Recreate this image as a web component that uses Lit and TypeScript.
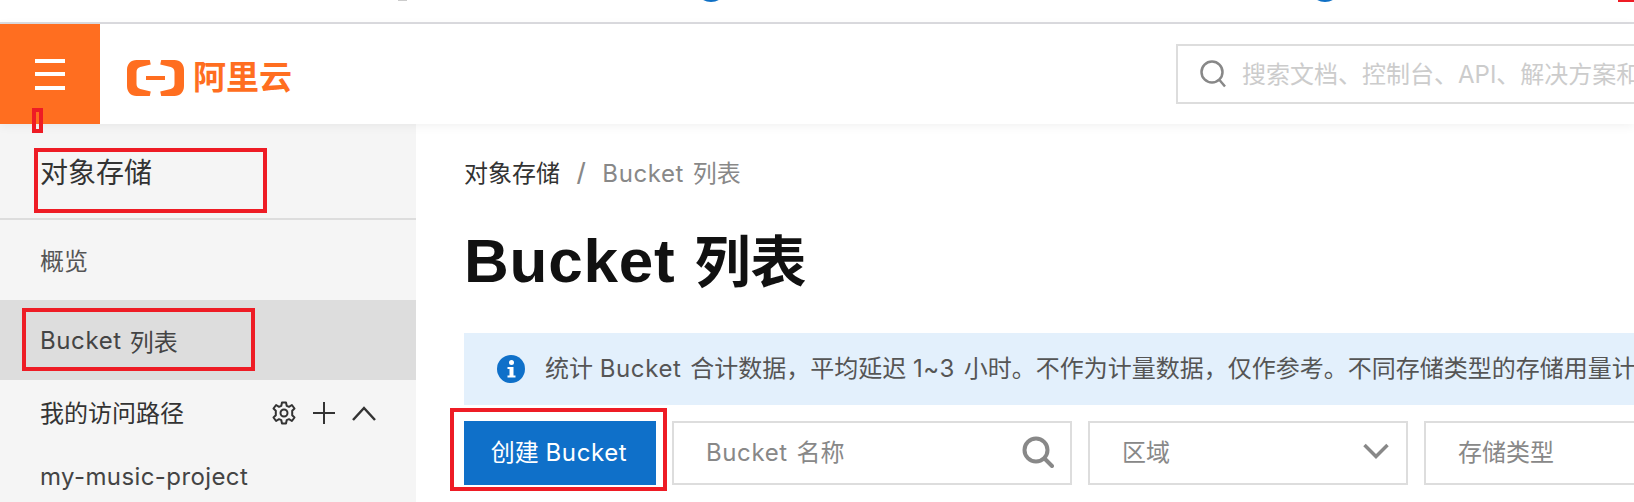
import { LitElement, html, css } from "lit";
import { customElement } from "lit/decorators.js";

@customElement("app-root")
export class AppRoot extends LitElement {
  static styles = css`
    :host {
      display: block;
      position: relative;
      width: 1634px;
      height: 502px;
      overflow: hidden;
      background: #fff;
      font-family: "Inter", "Noto Sans CJK SC", sans-serif;
      font-size: 24px;
      color: #333;
    }
    .lat { letter-spacing: .6px; margin-right: 2px; }
    .strip { position: relative; height: 22px; border-bottom: 2px solid #dcdce0; overflow: hidden; }
    .dot { position: absolute; top: -30px; width: 32px; height: 32px; border-radius: 50%; background: #0f70c5; }
    .d1 { left: 695px; }
    .d2 { left: 1309px; }
    .redtop { position: absolute; top: 0; left: 1618px; width: 16px; height: 2px; background: #ee1c25; }
    .speck { position: absolute; top: 0; left: 398px; width: 9px; height: 1px; background: #ccc; }
    header { position: relative; z-index: 2; display: flex; height: 100px; background: #fff; box-shadow: 0 2px 10px rgba(0,0,0,.06); }
    .menu { width: 100px; flex: none; background: #ff6e20; display: flex; flex-direction: column; justify-content: center; align-items: center; gap: 9.5px; box-sizing: border-box; }
    .menu i { display: block; width: 30px; height: 4px; background: #fff; }
    .logo { display: flex; align-items: center; gap: 9px; margin: 7px 0 0 27px; color: #ff6e20; font-size: 33px; font-weight: 700; line-height: 1; flex: none; }
    .logo svg { width: 57px; height: 38px; }
    .gsearch { margin: 20px 0 0 884px; height: 60px; flex: 1; min-width: 0; border: 2px solid #ddd; border-right: 0; display: flex; align-items: center; gap: 16px; padding-left: 22px; color: #ccc; white-space: nowrap; overflow: hidden; box-sizing: border-box; }
    .gsearch svg { width: 26px; height: 28px; flex: none; }
    .gsearch span { padding-bottom: 3px; }
    .body { display: flex; height: 378px; }
    aside { width: 416px; flex: none; background: #f5f5f5; }
    .title { height: 96px; box-sizing: border-box; border-bottom: 2px solid #ddd; padding: 31px 0 0 40px; font-size: 28px; line-height: 36px; }
    .item { height: 80px; display: flex; align-items: center; gap: 6px; padding-left: 40px; color: #555; }
    .item.ov { padding-bottom: 2px; box-sizing: border-box; }
    .item.on { background: #ddd; color: #444; }
    .path { height: 66px; display: flex; align-items: center; justify-content: space-between; padding: 0 40px; color: #333; }
    .path > span:first-child { padding-bottom: 4px; }
    .tools { display: flex; align-items: center; gap: 16px; }
    .tools svg { display: block; }
    .proj { padding: 16px 0 0 40px; color: #444; line-height: 30px; letter-spacing: .4px; }
    main { flex: 1; min-width: 0; padding: 32px 0 0 48px; overflow: hidden; }
    .crumb { display: flex; align-items: center; gap: 15px; line-height: 36px; color: #333; }
    .crumb .sep, .crumb .cur { color: #888; }
    .crumb .sep { font-family: "Liberation Sans", sans-serif; font-size: 30px; line-height: 36px; margin: 0 2px; }
    h1 { margin: 34px 0 0; font-family: "Liberation Sans", "Noto Sans CJK SC", sans-serif; font-size: 62px; line-height: 70px; font-weight: 700; color: #111; white-space: nowrap; letter-spacing: .8px; }
    h1 span { font-size: 56px; margin-left: 1px; letter-spacing: 0; }
    .banner { margin-top: 35px; height: 72px; background: #e3f0fc; display: flex; align-items: center; gap: 20px; padding-left: 33px; white-space: nowrap; color: #555; overflow: hidden; }
    .banner svg { flex: none; width: 28px; height: 28px; }
    .banner > span { padding-bottom: 5px; }
    .row { display: flex; gap: 16px; margin-top: 16px; height: 64px; }
    .btn { width: 192px; flex: none; background: #0f70c9; color: #fff; display: flex; align-items: center; justify-content: center; }
    .btn > span { padding-bottom: 5px; }
    .box { flex: none; border: 2px solid #ddd; box-sizing: border-box; display: flex; align-items: center; justify-content: space-between; color: #888; background: #fff; padding-left: 32px; }
    .box > span { padding-bottom: 5px; }
    .name { width: 400px; padding-right: 16px; }
    .region { width: 320px; padding-right: 17px; }
    .type { width: 300px; }
    .name svg { width: 32px; height: 32px; margin-bottom: 2px; }
    .region svg { width: 26px; height: 16px; margin-bottom: 4px; }
    .mark { position: absolute; border: 4px solid #ee1c25; box-sizing: border-box; z-index: 5; }
    .m1 { left: 32px; top: 108px; width: 11px; height: 25px; }
    .m2 { left: 34px; top: 148px; width: 233px; height: 65px; }
    .m3 { left: 22px; top: 308px; width: 233px; height: 63px; }
    .m4 { left: 450px; top: 408px; width: 217px; height: 83px; }
  `;

  render() {
    return html`
      <div class="strip">
        <span class="speck"></span><span class="dot d1"></span><span class="dot d2"></span><span class="redtop"></span>
      </div>
      <header>
        <div class="menu"><i></i><i></i><i></i></div>
        <div class="logo">
          <svg viewBox="0 0 60 38" preserveAspectRatio="none" aria-hidden="true">
            <path fill="#ff6e20" d="M24 1H10C4 1 0 5 0 11V27C0 33 4 37 10 37H24L25 32.500L14 30C11.500 29.300 10 27.500 10 25V13C10 10.500 11.500 8.700 14 8L25 5.500ZM36 1H50C56 1 60 5 60 11V27C60 33 56 37 50 37H36L35 32.500L46 30C48.500 29.300 50 27.500 50 25V13C50 10.500 48.500 8.700 46 8L35 5.500Z" />
            <rect x="20" y="17" width="20" height="4" fill="#ff6e20" />
          </svg>
          <span>阿里云</span>
        </div>
        <div class="gsearch">
          <svg viewBox="0 0 26 28" fill="none" stroke="#888" stroke-width="2.500" aria-hidden="true"><circle cx="12" cy="12" r="10.500" /><path d="M19.500 20L25 26.500" /></svg>
          <span>搜索文档、控制台、API、解决方案和</span>
        </div>
      </header>
      <div class="body">
        <aside>
          <div class="title">对象存储</div>
          <div class="item ov">概览</div>
          <div class="item on"><span class="lat">Bucket</span><span>列表</span></div>
          <div class="path">
            <span>我的访问路径</span>
            <span class="tools">
              <svg width="24" height="24" viewBox="0 0 24 24" fill="none" stroke="#333" stroke-width="2" stroke-linejoin="round" aria-hidden="true"><path d="M10 1.500H14L14.700 4.800L17 5.800L19.900 4L22.500 7.500L20.200 9.700V12V14.300L22.500 16.500L19.900 20L17 18.200L14.700 19.200L14 22.500H10L9.300 19.200L7 18.200L4.100 20L1.500 16.500L3.800 14.300V9.700L1.500 7.500L4.100 4L7 5.800L9.300 4.800Z" /><circle cx="12" cy="12" r="3.500" /></svg>
              <svg width="24" height="24" viewBox="0 0 24 24" stroke="#333" stroke-width="2" aria-hidden="true"><path d="M12 1V23M1 12H23" /></svg>
              <svg width="24" height="24" viewBox="0 0 24 24" fill="none" stroke="#333" stroke-width="2.500" aria-hidden="true"><path d="M1 19L12 7L23 19" /></svg>
            </span>
          </div>
          <div class="proj">my-music-project</div>
        </aside>
        <main>
          <div class="crumb"><span>对象存储</span><span class="sep">/</span><span class="cur"><span class="lat">Bucket</span> 列表</span></div>
          <h1>Bucket <span>列表</span></h1>
          <div class="banner">
            <svg viewBox="0 0 28 28" aria-hidden="true"><circle cx="14" cy="14" r="14" fill="#0f70c9" /><circle cx="14.500" cy="7.500" r="2.500" fill="#fff" /><path d="M10.500 12H16.500V20.500H18.500V22.500H10.500V20.500H12.500V14H10.500Z" fill="#fff" /></svg>
            <span>统计 <span class="lat">Bucket</span> 合计数据，平均延迟 <span class="lat">1~3</span> 小时。不作为计量数据，仅作参考。不同存储类型的存储用量计</span>
          </div>
          <div class="row">
            <div class="btn"><span>创建 <span class="lat">Bucket</span></span></div>
            <div class="box name"><span><span class="lat">Bucket</span> 名称</span>
              <svg viewBox="0 0 32 32" fill="none" stroke="#888" stroke-width="4" aria-hidden="true"><circle cx="14" cy="14" r="11.500" /><path d="M22.500 22.500L30 30" stroke-linecap="round" /></svg>
            </div>
            <div class="box region"><span>区域</span>
              <svg viewBox="0 0 26 16" fill="none" stroke="#888" stroke-width="3.500" aria-hidden="true"><path d="M1.500 2L13 13.500L24.500 2" /></svg>
            </div>
            <div class="box type"><span>存储类型</span></div>
          </div>
        </main>
      </div>
      <span class="mark m1"></span><span class="mark m2"></span><span class="mark m3"></span><span class="mark m4"></span>
    `;
  }
}
